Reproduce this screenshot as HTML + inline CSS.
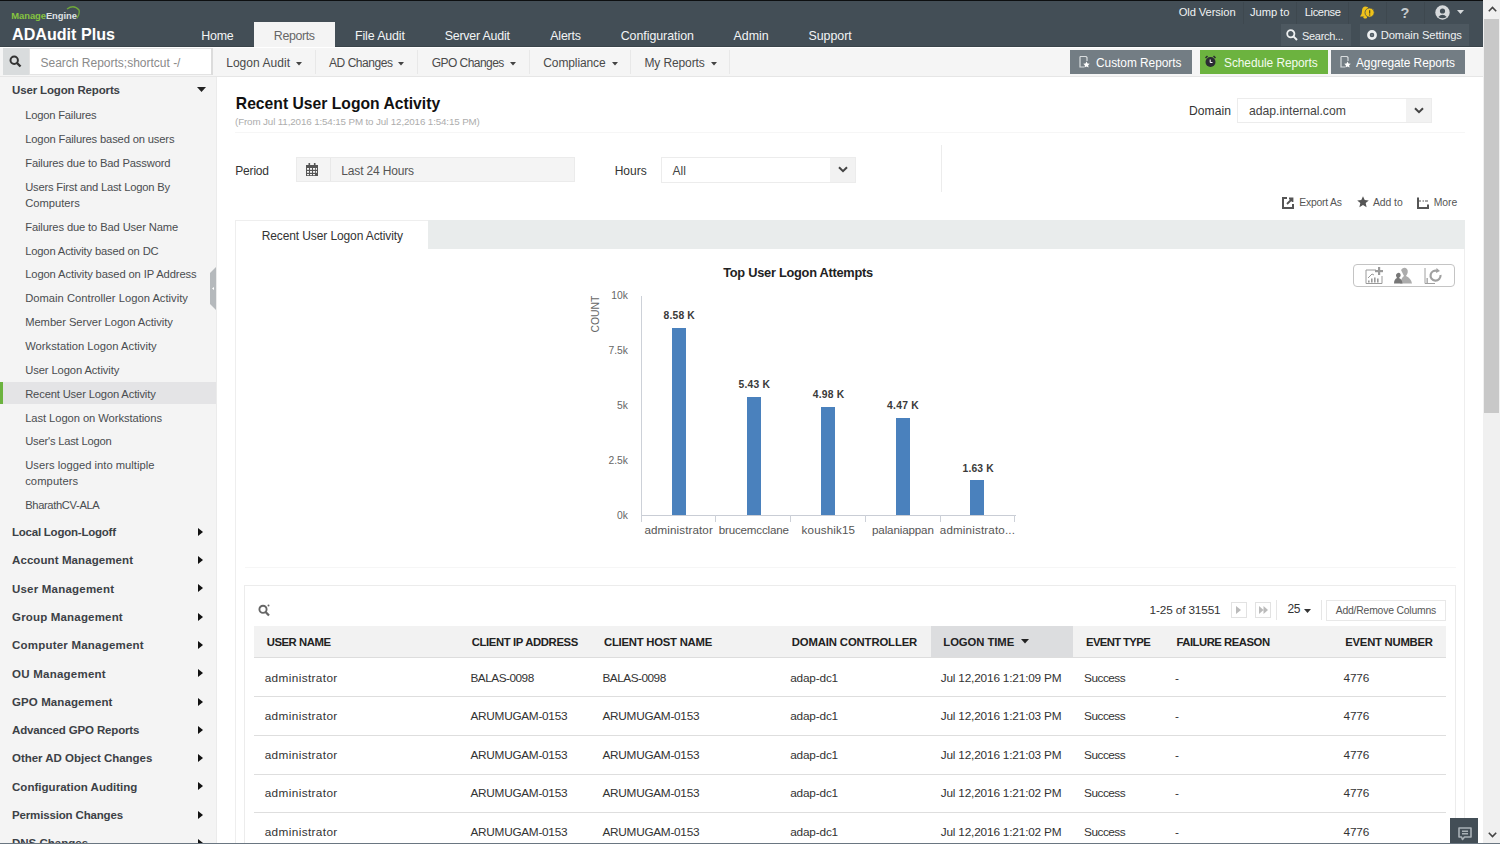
<!DOCTYPE html>
<html><head><meta charset="utf-8"><style>
html,body{margin:0;padding:0;}
body{width:1500px;height:844px;overflow:hidden;position:relative;background:#fff;font-family:"Liberation Sans",sans-serif;}
.t{position:absolute;white-space:nowrap;line-height:1;}
.r{position:absolute;}
</style></head><body>
<div class="r" style="left:0px;top:0px;width:1483px;height:47px;background:#434e56;"></div>
<div class="r" style="left:0px;top:0px;width:1483px;height:1px;background:#0d0f10;"></div>
<div class="r" style="left:0px;top:46px;width:1483px;height:1px;background:#3a444a;"></div>
<div class="t" style="left:11.30px;top:10.64px;font-size:9.4px;color:#fff;font-weight:bold;letter-spacing:-0.056px;"><span style="color:#86c440">Manage</span><span style="color:#dfe2e4">Engine</span></div>
<svg class="r" style="left:64px;top:5px" width="18" height="14" viewBox="0 0 18 14"><path d="M3 4 Q10 -1 15 5 Q16 9 13 13" fill="none" stroke="#6fa83a" stroke-width="1.3"/></svg>
<div class="t" style="left:12.00px;top:25.77px;font-size:16.1px;color:#ffffff;font-weight:bold;letter-spacing:0.011px;">ADAudit Plus</div>
<div class="r" style="left:254px;top:22px;width:81px;height:25px;background:#f4f4f4;"></div>
<div class="t" style="left:201.30px;top:29.80px;font-size:12.4px;color:#f2f4f5;letter-spacing:-0.236px;">Home</div>
<div class="t" style="left:273.80px;top:29.80px;font-size:12.4px;color:#666;letter-spacing:-0.367px;">Reports</div>
<div class="t" style="left:355.00px;top:29.80px;font-size:12.4px;color:#f2f4f5;letter-spacing:-0.114px;">File Audit</div>
<div class="t" style="left:444.70px;top:29.80px;font-size:12.4px;color:#f2f4f5;letter-spacing:-0.207px;">Server Audit</div>
<div class="t" style="left:550.30px;top:29.80px;font-size:12.4px;color:#f2f4f5;letter-spacing:-0.196px;">Alerts</div>
<div class="t" style="left:620.70px;top:29.80px;font-size:12.4px;color:#f2f4f5;letter-spacing:-0.040px;">Configuration</div>
<div class="t" style="left:733.60px;top:29.80px;font-size:12.4px;color:#f2f4f5;letter-spacing:0.011px;">Admin</div>
<div class="t" style="left:808.40px;top:29.80px;font-size:12.4px;color:#f2f4f5;letter-spacing:-0.010px;">Support</div>
<div class="t" style="left:1178.70px;top:7.22px;font-size:11.2px;color:#f0f2f3;letter-spacing:-0.090px;">Old Version</div>
<div class="t" style="left:1250.00px;top:7.22px;font-size:11.2px;color:#f0f2f3;letter-spacing:-0.069px;">Jump to</div>
<div class="t" style="left:1304.70px;top:7.22px;font-size:11.2px;color:#f0f2f3;letter-spacing:-0.381px;">License</div>
<div class="r" style="left:1243px;top:2px;width:1px;height:22px;background:#3e484f;"></div>
<div class="r" style="left:1296px;top:2px;width:1px;height:22px;background:#3e484f;"></div>
<div class="r" style="left:1348px;top:2px;width:1px;height:22px;background:#3e484f;"></div>
<div class="r" style="left:1386px;top:2px;width:1px;height:22px;background:#3e484f;"></div>
<div class="r" style="left:1424px;top:2px;width:1px;height:22px;background:#3e484f;"></div>
<svg class="r" style="left:1359px;top:5px" width="16" height="15" viewBox="0 0 16 15"><path d="M1 11.5 Q3 10 3 6 Q3 1.5 6.5 1.5 Q9 1.5 9.8 3.5 L10 11.5 Z" fill="#efc21a"/><rect x="4.5" y="11" width="3.5" height="2.5" rx="1.2" fill="#efc21a"/><circle cx="10.6" cy="7.6" r="4.6" fill="#efc21a" stroke="#434e56" stroke-width="0.8"/><rect x="10" y="5.2" width="1.3" height="3.4" fill="#5a5020"/><rect x="10" y="9.4" width="1.3" height="1.2" fill="#5a5020"/></svg>
<div class="t" style="left:1400.50px;top:5.63px;font-size:14.5px;color:#c6cbce;font-weight:bold;">?</div>
<svg class="r" style="left:1435px;top:5px" width="16" height="16" viewBox="0 0 16 16"><circle cx="7.5" cy="7.5" r="7.2" fill="#d7dadc"/><circle cx="7.5" cy="6" r="2.6" fill="#434e56"/><path d="M3.3 12 Q7.5 7.5 11.7 12 Q7.5 14.5 3.3 12Z" fill="#434e56"/></svg>
<svg class="r" style="left:1457px;top:10px" width="7" height="4" viewBox="0 0 7 4"><path d="M0 0 L7 0 L3.5 4Z" fill="#d7dadc"/></svg>
<div class="r" style="left:1281px;top:24px;width:70px;height:22px;background:#4d5860;"></div>
<svg class="r" style="left:1286px;top:29px" width="12" height="12" viewBox="0 0 12 12"><circle cx="4.8" cy="4.8" r="3.6" fill="none" stroke="#eef0f1" stroke-width="1.8"/><path d="M7.4 7.4 L11 11" stroke="#eef0f1" stroke-width="2"/></svg>
<div class="t" style="left:1302.00px;top:30.59px;font-size:11.0px;color:#eef0f1;letter-spacing:-0.300px;">Search...</div>
<div class="r" style="left:1360px;top:24px;width:109px;height:22px;background:#4d5860;"></div>
<svg class="r" style="left:1366px;top:29px" width="12" height="12" viewBox="0 0 12 12"><circle cx="6" cy="6" r="3.6" fill="none" stroke="#eef0f1" stroke-width="2.6"/><circle cx="6" cy="6" r="1.3" fill="#6d767c"/></svg>
<div class="t" style="left:1380.70px;top:30.42px;font-size:11.2px;color:#eef0f1;letter-spacing:-0.061px;">Domain Settings</div>
<div class="r" style="left:0px;top:47px;width:1483px;height:30px;background:#f5f5f5;"></div>
<div class="r" style="left:0px;top:47px;width:1483px;height:1px;background:#ffffff;"></div>
<div class="r" style="left:0px;top:76px;width:1483px;height:1px;background:#e6e6e6;"></div>
<div class="r" style="left:3px;top:48px;width:26px;height:27px;background:#d9dcdd;"></div>
<svg class="r" style="left:9px;top:55px" width="13" height="13" viewBox="0 0 13 13"><circle cx="5.2" cy="5.2" r="3.7" fill="none" stroke="#333" stroke-width="2"/><path d="M8 8 L11.5 11.5" stroke="#333" stroke-width="2.4"/></svg>
<div class="r" style="left:29px;top:48px;width:183px;height:27px;background:#ffffff;box-shadow:inset 0 0 0 1px #e3e3e3;"></div>
<div class="r" style="left:211px;top:48px;width:2px;height:27px;background:#dcdcdc;"></div>
<div class="t" style="left:40.50px;top:56.74px;font-size:12.0px;color:#8a8a8a;letter-spacing:-0.004px;">Search Reports;shortcut -/</div>
<div class="t" style="left:226.20px;top:57.04px;font-size:12.0px;color:#4a4a4a;letter-spacing:0.038px;">Logon Audit</div>
<svg class="r" style="left:295.6px;top:62px" width="6" height="4" viewBox="0 0 6 4"><path d="M0 0 L6 0 L3 3.5Z" fill="#444"/></svg>
<div class="t" style="left:329.00px;top:57.04px;font-size:12.0px;color:#4a4a4a;letter-spacing:-0.449px;">AD Changes</div>
<svg class="r" style="left:397.5px;top:62px" width="6" height="4" viewBox="0 0 6 4"><path d="M0 0 L6 0 L3 3.5Z" fill="#444"/></svg>
<div class="t" style="left:431.70px;top:57.04px;font-size:12.0px;color:#4a4a4a;letter-spacing:-0.546px;">GPO Changes</div>
<svg class="r" style="left:510px;top:62px" width="6" height="4" viewBox="0 0 6 4"><path d="M0 0 L6 0 L3 3.5Z" fill="#444"/></svg>
<div class="t" style="left:543.30px;top:57.04px;font-size:12.0px;color:#4a4a4a;letter-spacing:-0.118px;">Compliance</div>
<svg class="r" style="left:611.5px;top:62px" width="6" height="4" viewBox="0 0 6 4"><path d="M0 0 L6 0 L3 3.5Z" fill="#444"/></svg>
<div class="t" style="left:644.40px;top:57.04px;font-size:12.0px;color:#4a4a4a;letter-spacing:-0.102px;">My Reports</div>
<svg class="r" style="left:710.5px;top:62px" width="6" height="4" viewBox="0 0 6 4"><path d="M0 0 L6 0 L3 3.5Z" fill="#444"/></svg>
<div class="r" style="left:315px;top:50px;width:1px;height:24px;background:#e8e8e8;"></div>
<div class="r" style="left:417px;top:50px;width:1px;height:24px;background:#e8e8e8;"></div>
<div class="r" style="left:529px;top:50px;width:1px;height:24px;background:#e8e8e8;"></div>
<div class="r" style="left:630px;top:50px;width:1px;height:24px;background:#e8e8e8;"></div>
<div class="r" style="left:729px;top:50px;width:1px;height:24px;background:#e8e8e8;"></div>
<div class="r" style="left:1070px;top:50px;width:122px;height:24px;background:#737d84;"></div>
<div class="r" style="left:1200px;top:50px;width:128px;height:24px;background:#6cb33f;"></div>
<div class="r" style="left:1331px;top:50px;width:134px;height:24px;background:#737d84;"></div>
<svg class="r" style="left:1079px;top:56px" width="11" height="12" viewBox="0 0 11 12"><path d="M1 0.5 H7 L8 1.5 V5 M1 0.5 V11 H5" fill="none" stroke="#d8dcde" stroke-width="1.2"/><path d="M7.5 5.5 L8.5 7.6 L10.8 7.8 L9.1 9.3 L9.6 11.6 L7.5 10.4 L5.4 11.6 L5.9 9.3 L4.2 7.8 L6.5 7.6Z" fill="#fff"/></svg>
<svg class="r" style="left:1340px;top:56px" width="11" height="12" viewBox="0 0 11 12"><path d="M1 0.5 H7 L8 1.5 V5 M1 0.5 V11 H5" fill="none" stroke="#d8dcde" stroke-width="1.2"/><path d="M7.5 5.5 L8.5 7.6 L10.8 7.8 L9.1 9.3 L9.6 11.6 L7.5 10.4 L5.4 11.6 L5.9 9.3 L4.2 7.8 L6.5 7.6Z" fill="#fff"/></svg>
<div class="t" style="left:1096.00px;top:57.53px;font-size:11.9px;color:#ffffff;letter-spacing:-0.037px;">Custom Reports</div>
<svg class="r" style="left:1204px;top:55px" width="13" height="13" viewBox="0 0 13 13"><circle cx="6.5" cy="7" r="5" fill="#2b2b33"/><path d="M1.5 3 L3.5 1 M11.5 3 L9.5 1" stroke="#2b2b33" stroke-width="1.5"/><path d="M6.2 4.5 V7.5 H8.5" stroke="#fff" stroke-width="1" fill="none"/></svg>
<div class="t" style="left:1224.00px;top:57.53px;font-size:11.9px;color:#f3fbee;letter-spacing:-0.054px;">Schedule Reports</div>
<div class="t" style="left:1356.00px;top:57.53px;font-size:11.9px;color:#ffffff;letter-spacing:-0.056px;">Aggregate Reports</div>
<div class="r" style="left:0px;top:77px;width:216px;height:767px;background:#f4f4f4;"></div>
<div class="r" style="left:216px;top:77px;width:1px;height:767px;background:#ebebeb;"></div>
<div class="t" style="left:12.00px;top:84.67px;font-size:11.5px;color:#3c4146;font-weight:bold;letter-spacing:-0.148px;">User Logon Reports</div>
<svg class="r" style="left:197px;top:87px" width="9" height="5" viewBox="0 0 9 5"><path d="M0 0 L9 0 L4.5 5Z" fill="#222"/></svg>
<div class="t" style="left:25.20px;top:110.32px;font-size:11.2px;color:#4a4d50;letter-spacing:-0.199px;">Logon Failures</div>
<div class="t" style="left:25.20px;top:134.17px;font-size:11.2px;color:#4a4d50;letter-spacing:-0.153px;">Logon Failures based on users</div>
<div class="t" style="left:25.20px;top:158.02px;font-size:11.2px;color:#4a4d50;letter-spacing:-0.145px;">Failures due to Bad Password</div>
<div class="t" style="left:25.20px;top:181.87px;font-size:11.2px;color:#4a4d50;letter-spacing:-0.201px;">Users First and Last Logon By</div>
<div class="t" style="left:25.20px;top:197.87px;font-size:11.2px;color:#4a4d50;letter-spacing:-0.008px;">Computers</div>
<div class="t" style="left:25.20px;top:221.72px;font-size:11.2px;color:#4a4d50;letter-spacing:-0.134px;">Failures due to Bad User Name</div>
<div class="t" style="left:25.20px;top:245.57px;font-size:11.2px;color:#4a4d50;letter-spacing:-0.160px;">Logon Activity based on DC</div>
<div class="t" style="left:25.20px;top:269.42px;font-size:11.2px;color:#4a4d50;letter-spacing:-0.115px;">Logon Activity based on IP Address</div>
<div class="t" style="left:25.20px;top:293.27px;font-size:11.2px;color:#4a4d50;letter-spacing:0.014px;">Domain Controller Logon Activity</div>
<div class="t" style="left:25.20px;top:317.12px;font-size:11.2px;color:#4a4d50;letter-spacing:-0.056px;">Member Server Logon Activity</div>
<div class="t" style="left:25.20px;top:340.97px;font-size:11.2px;color:#4a4d50;letter-spacing:0.018px;">Workstation Logon Activity</div>
<div class="t" style="left:25.20px;top:364.82px;font-size:11.2px;color:#4a4d50;letter-spacing:-0.093px;">User Logon Activity</div>
<div class="r" style="left:0px;top:382px;width:216px;height:22px;background:#e4e4e6;"></div>
<div class="r" style="left:0px;top:382px;width:3px;height:22px;background:#6cb33f;"></div>
<div class="t" style="left:25.20px;top:388.67px;font-size:11.2px;color:#4a4d50;letter-spacing:-0.150px;">Recent User Logon Activity</div>
<div class="t" style="left:25.20px;top:412.52px;font-size:11.2px;color:#4a4d50;letter-spacing:-0.066px;">Last Logon on Workstations</div>
<div class="t" style="left:25.20px;top:436.37px;font-size:11.2px;color:#4a4d50;letter-spacing:-0.208px;">User's Last Logon</div>
<div class="t" style="left:25.20px;top:460.22px;font-size:11.2px;color:#4a4d50;letter-spacing:0.022px;">Users logged into multiple</div>
<div class="t" style="left:25.20px;top:476.22px;font-size:11.2px;color:#4a4d50;letter-spacing:0.087px;">computers</div>
<div class="t" style="left:25.20px;top:500.07px;font-size:11.2px;color:#4a4d50;letter-spacing:-0.361px;">BharathCV-ALA</div>
<div class="t" style="left:12.00px;top:527.07px;font-size:11.5px;color:#3c4146;font-weight:bold;letter-spacing:-0.234px;">Local Logon-Logoff</div>
<svg class="r" style="left:197.5px;top:527.7px" width="5" height="8" viewBox="0 0 5 8"><path d="M0 0 L5 4 L0 8Z" fill="#111"/></svg>
<div class="t" style="left:12.00px;top:555.37px;font-size:11.5px;color:#3c4146;font-weight:bold;letter-spacing:0.089px;">Account Management</div>
<svg class="r" style="left:197.5px;top:556.0px" width="5" height="8" viewBox="0 0 5 8"><path d="M0 0 L5 4 L0 8Z" fill="#111"/></svg>
<div class="t" style="left:12.00px;top:583.67px;font-size:11.5px;color:#3c4146;font-weight:bold;letter-spacing:0.209px;">User Management</div>
<svg class="r" style="left:197.5px;top:584.3px" width="5" height="8" viewBox="0 0 5 8"><path d="M0 0 L5 4 L0 8Z" fill="#111"/></svg>
<div class="t" style="left:12.00px;top:611.97px;font-size:11.5px;color:#3c4146;font-weight:bold;letter-spacing:0.181px;">Group Management</div>
<svg class="r" style="left:197.5px;top:612.6px" width="5" height="8" viewBox="0 0 5 8"><path d="M0 0 L5 4 L0 8Z" fill="#111"/></svg>
<div class="t" style="left:12.00px;top:640.27px;font-size:11.5px;color:#3c4146;font-weight:bold;letter-spacing:0.215px;">Computer Management</div>
<svg class="r" style="left:197.5px;top:640.9px" width="5" height="8" viewBox="0 0 5 8"><path d="M0 0 L5 4 L0 8Z" fill="#111"/></svg>
<div class="t" style="left:12.00px;top:668.57px;font-size:11.5px;color:#3c4146;font-weight:bold;letter-spacing:0.247px;">OU Management</div>
<svg class="r" style="left:197.5px;top:669.2px" width="5" height="8" viewBox="0 0 5 8"><path d="M0 0 L5 4 L0 8Z" fill="#111"/></svg>
<div class="t" style="left:12.00px;top:696.87px;font-size:11.5px;color:#3c4146;font-weight:bold;letter-spacing:0.102px;">GPO Management</div>
<svg class="r" style="left:197.5px;top:697.5px" width="5" height="8" viewBox="0 0 5 8"><path d="M0 0 L5 4 L0 8Z" fill="#111"/></svg>
<div class="t" style="left:12.00px;top:725.17px;font-size:11.5px;color:#3c4146;font-weight:bold;letter-spacing:-0.155px;">Advanced GPO Reports</div>
<svg class="r" style="left:197.5px;top:725.8px" width="5" height="8" viewBox="0 0 5 8"><path d="M0 0 L5 4 L0 8Z" fill="#111"/></svg>
<div class="t" style="left:12.00px;top:753.47px;font-size:11.5px;color:#3c4146;font-weight:bold;letter-spacing:-0.019px;">Other AD Object Changes</div>
<svg class="r" style="left:197.5px;top:754.1px" width="5" height="8" viewBox="0 0 5 8"><path d="M0 0 L5 4 L0 8Z" fill="#111"/></svg>
<div class="t" style="left:12.00px;top:781.77px;font-size:11.5px;color:#3c4146;font-weight:bold;letter-spacing:0.030px;">Configuration Auditing</div>
<svg class="r" style="left:197.5px;top:782.4px" width="5" height="8" viewBox="0 0 5 8"><path d="M0 0 L5 4 L0 8Z" fill="#111"/></svg>
<div class="t" style="left:12.00px;top:810.07px;font-size:11.5px;color:#3c4146;font-weight:bold;letter-spacing:-0.155px;">Permission Changes</div>
<svg class="r" style="left:197.5px;top:810.7px" width="5" height="8" viewBox="0 0 5 8"><path d="M0 0 L5 4 L0 8Z" fill="#111"/></svg>
<div class="t" style="left:12.00px;top:838.37px;font-size:11.5px;color:#3c4146;font-weight:bold;">DNS Changes</div>
<svg class="r" style="left:197.5px;top:839.0px" width="5" height="8" viewBox="0 0 5 8"><path d="M0 0 L5 4 L0 8Z" fill="#111"/></svg>
<svg class="r" style="left:210px;top:267px" width="7" height="43" viewBox="0 0 7 43"><path d="M6 0 L6 43 L0 37 L0 6Z" fill="#b5b9bc"/><path d="M2 21.5 L4 20 L4 23Z" fill="#fff"/></svg>
<div class="r" style="left:1483px;top:0px;width:17px;height:844px;background:#f0f0f0;"></div>
<div class="r" style="left:1484px;top:19px;width:15px;height:394px;background:#c8c8c8;"></div>
<svg class="r" style="left:1488px;top:6px" width="9" height="6" viewBox="0 0 9 6"><path d="M0.8 5.2 L4.5 1.5 L8.2 5.2" fill="none" stroke="#444" stroke-width="1.6"/></svg>
<svg class="r" style="left:1488px;top:832px" width="9" height="6" viewBox="0 0 9 6"><path d="M0.8 0.8 L4.5 4.5 L8.2 0.8" fill="none" stroke="#444" stroke-width="1.6"/></svg>
<div class="t" style="left:235.80px;top:95.51px;font-size:15.7px;color:#111;font-weight:bold;letter-spacing:0.003px;">Recent User Logon Activity</div>
<div class="t" style="left:235.00px;top:117.30px;font-size:9.8px;color:#adadad;letter-spacing:-0.131px;">(From Jul 11,2016 1:54:15 PM to Jul 12,2016 1:54:15 PM)</div>
<div class="r" style="left:235px;top:132px;width:1230px;height:1px;background:#f6f6f6;"></div>
<div class="t" style="left:1189.00px;top:104.76px;font-size:12.1px;color:#333;letter-spacing:0.063px;">Domain</div>
<div class="r" style="left:1237px;top:98px;width:195px;height:25px;background:#fff;box-shadow:inset 0 0 0 1px #ececec;"></div>
<div class="r" style="left:1406px;top:99px;width:25px;height:23px;background:#f2f2f2;"></div>
<div class="t" style="left:1249.00px;top:104.67px;font-size:12.2px;color:#444;letter-spacing:0.001px;">adap.internal.com</div>
<svg class="r" style="left:1413.5px;top:107px" width="10" height="7" viewBox="0 0 10 7"><path d="M1 1.2 L5 5.2 L9 1.2" fill="none" stroke="#444" stroke-width="2"/></svg>
<div class="t" style="left:235.30px;top:165.14px;font-size:12.0px;color:#333;letter-spacing:-0.196px;">Period</div>
<div class="r" style="left:296px;top:157px;width:279px;height:25px;background:#f4f4f4;box-shadow:inset 0 0 0 1px #ebebeb;"></div>
<div class="r" style="left:330px;top:158px;width:1px;height:23px;background:#e8e8e8;"></div>
<svg class="r" style="left:306px;top:163px" width="12" height="13" viewBox="0 0 12 13"><rect x="0" y="2" width="12" height="11" fill="#555"/><rect x="2.5" y="0" width="1.6" height="3" fill="#555"/><rect x="7.9" y="0" width="1.6" height="3" fill="#555"/><g fill="#f3f3f3"><rect x="1" y="5" width="2" height="1.8"/><rect x="4" y="5" width="2" height="1.8"/><rect x="7" y="5" width="2" height="1.8"/><rect x="1" y="8" width="2" height="1.8"/><rect x="4" y="8" width="2" height="1.8"/><rect x="7" y="8" width="2" height="1.8"/><rect x="1" y="11" width="2" height="1.2"/><rect x="4" y="11" width="2" height="1.2"/><rect x="7" y="11" width="2" height="1.2"/><rect x="9.8" y="5" width="1.2" height="1.8"/><rect x="9.8" y="8" width="1.2" height="1.8"/></g></svg>
<div class="t" style="left:341.30px;top:165.14px;font-size:12.0px;color:#555;letter-spacing:-0.167px;">Last 24 Hours</div>
<div class="t" style="left:614.70px;top:165.14px;font-size:12.0px;color:#333;letter-spacing:-0.010px;">Hours</div>
<div class="r" style="left:661px;top:157px;width:195px;height:26px;background:#fff;box-shadow:inset 0 0 0 1px #ececec;"></div>
<div class="r" style="left:830px;top:158px;width:25px;height:24px;background:#f2f2f2;"></div>
<svg class="r" style="left:838px;top:166px" width="10" height="7" viewBox="0 0 10 7"><path d="M1 1.2 L5 5.2 L9 1.2" fill="none" stroke="#444" stroke-width="2"/></svg>
<div class="t" style="left:672.50px;top:165.14px;font-size:12.0px;color:#444;">All</div>
<div class="r" style="left:941px;top:145px;width:1px;height:47px;background:#ececec;"></div>
<svg class="r" style="left:1282px;top:197px" width="12" height="12" viewBox="0 0 12 12"><path d="M5 1 H1 V11 H11 V7" fill="none" stroke="#555" stroke-width="2"/><path d="M5 7 L10 2 M7 1.5 H10.5 V5" fill="none" stroke="#555" stroke-width="1.8"/></svg>
<div class="t" style="left:1299.30px;top:197.80px;font-size:10.4px;color:#555;letter-spacing:-0.226px;">Export As</div>
<svg class="r" style="left:1357px;top:196px" width="12" height="12" viewBox="0 0 12 12"><path d="M6 0.3 L7.7 4.1 L11.8 4.4 L8.7 7.1 L9.6 11.2 L6 9 L2.4 11.2 L3.3 7.1 L0.2 4.4 L4.3 4.1Z" fill="#555"/></svg>
<div class="t" style="left:1373.00px;top:197.80px;font-size:10.4px;color:#555;letter-spacing:-0.071px;">Add to</div>
<svg class="r" style="left:1417px;top:197px" width="12" height="12" viewBox="0 0 12 12"><path d="M1 0.5 V11 H11 V7.5" fill="none" stroke="#555" stroke-width="2"/><path d="M1 4 H4 M5.5 4 H7 M8 4 H11" stroke="#555" stroke-width="1.2"/></svg>
<div class="t" style="left:1433.70px;top:197.80px;font-size:10.4px;color:#555;letter-spacing:-0.037px;">More</div>
<div class="r" style="left:235px;top:220px;width:1230px;height:624px;background:#fff;box-shadow:inset 1px 0 0 #eeeeee, inset -1px 0 0 #eeeeee, inset 0 1px 0 #eeeeee;"></div>
<div class="r" style="left:428px;top:220px;width:1037px;height:29px;background:#e9ecec;"></div>
<div class="t" style="left:261.70px;top:229.74px;font-size:12.0px;color:#333;letter-spacing:-0.110px;">Recent User Logon Activity</div>
<div class="t" style="left:723.20px;top:266.56px;font-size:12.8px;color:#222;font-weight:bold;letter-spacing:-0.260px;">Top User Logon Attempts</div>
<div class="r" style="left:1353px;top:264px;width:102px;height:23px;border:1px solid #c4c4c4;border-radius:4px;box-sizing:border-box;"></div>
<svg class="r" style="left:1364px;top:266px" width="82" height="19" viewBox="0 0 82 19">
<g fill="none" stroke="#9a9a9a"><path d="M2 4 V17.5 H18 V10" stroke-width="1"/><path d="M2 4 H12" stroke-width="1"/><path d="M4 12 L8 8 L10 9" stroke-width="1"/></g>
<g fill="#9a9a9a"><rect x="4" y="14.5" width="1.6" height="2"/><rect x="7" y="12.5" width="1.6" height="4"/><rect x="10" y="11.5" width="1.6" height="5"/><rect x="13" y="12.5" width="1.6" height="4"/><rect x="14" y="1" width="2.2" height="8"/><rect x="11" y="4" width="8" height="2.2"/></g>
<g fill="#9d9d9d"><path d="M37 4 Q40 0 43 3 Q45 6 42 10 Q47 12 48 17.5 H36 Q37 12 40 10Z" opacity="0.85"/><path d="M30 17.5 Q30 13 33 12 Q31 9 33 7.5 Q35 6 36.5 8 Q37.5 10 35 12 Q38 13 38.5 17.5Z" fill="#777"/></g>
<g fill="none" stroke="#a0a0a0"><path d="M61 2 V17.5 H71" stroke-width="1"/><rect x="62.5" y="12" width="1.3" height="5" fill="#a0a0a0" stroke="none"/><path d="M76.5 9 A5 5 0 1 1 73.5 5" stroke-width="2.2"/><path d="M72.5 2 L76 5 L72 7Z" fill="#a0a0a0" stroke="none"/></g>
</svg>
<div class="t" style="left:575.5px;top:309px;width:40px;font-size:10.4px;line-height:10px;color:#666;text-align:center;transform:rotate(-90deg);">COUNT</div>
<div class="t" style="left:611.37px;top:290.68px;font-size:10.3px;color:#666;">10k</div>
<div class="t" style="left:608.48px;top:345.68px;font-size:10.3px;color:#666;">7.5k</div>
<div class="t" style="left:617.08px;top:400.68px;font-size:10.3px;color:#666;">5k</div>
<div class="t" style="left:608.48px;top:455.68px;font-size:10.3px;color:#666;">2.5k</div>
<div class="t" style="left:617.08px;top:510.68px;font-size:10.3px;color:#666;">0k</div>
<div class="r" style="left:641px;top:296px;width:1px;height:226px;background:#cdd1d8;"></div>
<div class="r" style="left:641px;top:515px;width:375px;height:1px;background:#c9cdd5;"></div>
<div class="r" style="left:641px;top:515px;width:1px;height:7px;background:#cdd1d8;"></div>
<div class="r" style="left:715px;top:515px;width:1px;height:7px;background:#cdd1d8;"></div>
<div class="r" style="left:790px;top:515px;width:1px;height:7px;background:#cdd1d8;"></div>
<div class="r" style="left:865px;top:515px;width:1px;height:7px;background:#cdd1d8;"></div>
<div class="r" style="left:940px;top:515px;width:1px;height:7px;background:#cdd1d8;"></div>
<div class="r" style="left:1014px;top:515px;width:1px;height:7px;background:#cdd1d8;"></div>
<div class="r" style="left:672px;top:328px;width:13.5px;height:187px;background:#4a81bd;"></div>
<div class="t" style="left:663.60px;top:311.48px;font-size:10.3px;color:#3a3a3a;font-weight:bold;letter-spacing:0.173px;">8.58 K</div>
<div class="t" style="left:644.40px;top:524.38px;font-size:11.6px;color:#555;letter-spacing:0.113px;">administrator</div>
<div class="r" style="left:747px;top:397px;width:13.5px;height:118px;background:#4a81bd;"></div>
<div class="t" style="left:738.60px;top:380.46px;font-size:10.3px;color:#3a3a3a;font-weight:bold;letter-spacing:0.213px;">5.43 K</div>
<div class="t" style="left:718.70px;top:524.38px;font-size:11.6px;color:#555;letter-spacing:-0.165px;">brucemcclane</div>
<div class="r" style="left:821px;top:407px;width:13.5px;height:108px;background:#4a81bd;"></div>
<div class="t" style="left:812.80px;top:390.32px;font-size:10.3px;color:#3a3a3a;font-weight:bold;letter-spacing:0.233px;">4.98 K</div>
<div class="t" style="left:801.60px;top:524.38px;font-size:11.6px;color:#555;letter-spacing:0.155px;">koushik15</div>
<div class="r" style="left:896px;top:418px;width:13.5px;height:97px;background:#4a81bd;"></div>
<div class="t" style="left:887.00px;top:401.49px;font-size:10.3px;color:#3a3a3a;font-weight:bold;letter-spacing:0.273px;">4.47 K</div>
<div class="t" style="left:872.00px;top:524.38px;font-size:11.6px;color:#555;letter-spacing:-0.132px;">palaniappan</div>
<div class="r" style="left:970px;top:480px;width:13.5px;height:35px;background:#4a81bd;"></div>
<div class="t" style="left:962.60px;top:463.68px;font-size:10.3px;color:#3a3a3a;font-weight:bold;letter-spacing:0.153px;">1.63 K</div>
<div class="t" style="left:939.80px;top:524.38px;font-size:11.6px;color:#555;letter-spacing:0.168px;">administrato...</div>
<div class="r" style="left:245px;top:567px;width:1211px;height:1px;background:#f6f6f6;"></div>
<div class="r" style="left:244px;top:585px;width:1212px;height:270px;border:1px solid #ececec;box-sizing:border-box;"></div>
<svg class="r" style="left:258px;top:604px" width="13" height="13" viewBox="0 0 13 13"><circle cx="5" cy="5.3" r="3.6" fill="none" stroke="#666" stroke-width="1.9"/><path d="M7.6 8 L11 11.5" stroke="#666" stroke-width="2.3"/><circle cx="10.5" cy="1.5" r="1" fill="#666"/></svg>
<div class="t" style="left:1149.60px;top:605.11px;font-size:11.8px;color:#333;letter-spacing:-0.150px;">1-25 of 31551</div>
<div class="r" style="left:1231px;top:602px;width:16px;height:16px;border:1px solid #e2e2e2;box-sizing:border-box;"></div>
<svg class="r" style="left:1236px;top:606px" width="5" height="8" viewBox="0 0 5 8"><path d="M0 0 L5 4 L0 8Z" fill="#bbb"/></svg>
<div class="r" style="left:1255px;top:602px;width:16px;height:16px;border:1px solid #e2e2e2;box-sizing:border-box;"></div>
<svg class="r" style="left:1258.5px;top:606px" width="9" height="8" viewBox="0 0 9 8"><path d="M0 0 L4.5 4 L0 8Z M4.5 0 L9 4 L4.5 8Z" fill="#bbb"/></svg>
<div class="r" style="left:1276px;top:600px;width:1px;height:20px;background:#e6e6e6;"></div>
<div class="t" style="left:1287.50px;top:602.84px;font-size:12px;color:#333;letter-spacing:-0.520px;">25</div>
<svg class="r" style="left:1304px;top:609px" width="7" height="4" viewBox="0 0 7 4"><path d="M0 0 L7 0 L3.5 4Z" fill="#333"/></svg>
<div class="r" style="left:1321px;top:600px;width:1px;height:20px;background:#e6e6e6;"></div>
<div class="r" style="left:1326px;top:600px;width:120px;height:21px;border:1px solid #e8e8e8;box-sizing:border-box;"></div>
<div class="t" style="left:1335.70px;top:605.70px;font-size:10.4px;color:#555;letter-spacing:-0.197px;">Add/Remove Columns</div>
<div class="r" style="left:254px;top:626px;width:1192px;height:31px;background:#f2f2f2;"></div>
<div class="r" style="left:931px;top:626px;width:142px;height:31px;background:#dcdddf;"></div>
<div class="r" style="left:254px;top:657px;width:1192px;height:1px;background:#dddddd;"></div>
<div class="t" style="left:266.70px;top:636.83px;font-size:11.3px;color:#222;font-weight:bold;letter-spacing:-0.437px;">USER NAME</div>
<div class="t" style="left:471.70px;top:636.83px;font-size:11.3px;color:#222;font-weight:bold;letter-spacing:-0.361px;">CLIENT IP ADDRESS</div>
<div class="t" style="left:604.00px;top:636.83px;font-size:11.3px;color:#222;font-weight:bold;letter-spacing:-0.230px;">CLIENT HOST NAME</div>
<div class="t" style="left:791.70px;top:636.83px;font-size:11.3px;color:#222;font-weight:bold;letter-spacing:-0.113px;">DOMAIN CONTROLLER</div>
<div class="t" style="left:943.30px;top:636.83px;font-size:11.3px;color:#222;font-weight:bold;letter-spacing:-0.065px;">LOGON TIME</div>
<div class="t" style="left:1086.00px;top:636.83px;font-size:11.3px;color:#222;font-weight:bold;letter-spacing:-0.627px;">EVENT TYPE</div>
<div class="t" style="left:1176.40px;top:636.83px;font-size:11.3px;color:#222;font-weight:bold;letter-spacing:-0.472px;">FAILURE REASON</div>
<div class="t" style="left:1345.30px;top:636.83px;font-size:11.3px;color:#222;font-weight:bold;letter-spacing:-0.255px;">EVENT NUMBER</div>
<svg class="r" style="left:1021px;top:639px" width="8" height="5" viewBox="0 0 8 5"><path d="M0 0 L8 0 L4 4.5Z" fill="#222"/></svg>
<div class="t" style="left:264.70px;top:672.61px;font-size:11.8px;color:#333;letter-spacing:0.366px;">administrator</div>
<div class="t" style="left:470.50px;top:672.61px;font-size:11.8px;color:#333;letter-spacing:-0.500px;">BALAS-0098</div>
<div class="t" style="left:602.50px;top:672.61px;font-size:11.8px;color:#333;letter-spacing:-0.500px;">BALAS-0098</div>
<div class="t" style="left:790.20px;top:672.61px;font-size:11.8px;color:#333;letter-spacing:-0.172px;">adap-dc1</div>
<div class="t" style="left:940.70px;top:672.61px;font-size:11.8px;color:#333;letter-spacing:-0.175px;">Jul 12,2016 1:21:09 PM</div>
<div class="t" style="left:1084.00px;top:672.61px;font-size:11.8px;color:#333;letter-spacing:-0.484px;">Success</div>
<div class="t" style="left:1175.00px;top:672.61px;font-size:11.8px;color:#333;">-</div>
<div class="t" style="left:1343.60px;top:672.61px;font-size:11.8px;color:#333;letter-spacing:-0.185px;">4776</div>
<div class="r" style="left:254px;top:696px;width:1192px;height:1px;background:#dedede;"></div>
<div class="t" style="left:264.70px;top:711.21px;font-size:11.8px;color:#333;letter-spacing:0.366px;">administrator</div>
<div class="t" style="left:470.50px;top:711.21px;font-size:11.8px;color:#333;letter-spacing:-0.275px;">ARUMUGAM-0153</div>
<div class="t" style="left:602.50px;top:711.21px;font-size:11.8px;color:#333;letter-spacing:-0.275px;">ARUMUGAM-0153</div>
<div class="t" style="left:790.20px;top:711.21px;font-size:11.8px;color:#333;letter-spacing:-0.172px;">adap-dc1</div>
<div class="t" style="left:940.70px;top:711.21px;font-size:11.8px;color:#333;letter-spacing:-0.175px;">Jul 12,2016 1:21:03 PM</div>
<div class="t" style="left:1084.00px;top:711.21px;font-size:11.8px;color:#333;letter-spacing:-0.484px;">Success</div>
<div class="t" style="left:1175.00px;top:711.21px;font-size:11.8px;color:#333;">-</div>
<div class="t" style="left:1343.60px;top:711.21px;font-size:11.8px;color:#333;letter-spacing:-0.185px;">4776</div>
<div class="r" style="left:254px;top:735px;width:1192px;height:1px;background:#dedede;"></div>
<div class="t" style="left:264.70px;top:749.81px;font-size:11.8px;color:#333;letter-spacing:0.366px;">administrator</div>
<div class="t" style="left:470.50px;top:749.81px;font-size:11.8px;color:#333;letter-spacing:-0.275px;">ARUMUGAM-0153</div>
<div class="t" style="left:602.50px;top:749.81px;font-size:11.8px;color:#333;letter-spacing:-0.275px;">ARUMUGAM-0153</div>
<div class="t" style="left:790.20px;top:749.81px;font-size:11.8px;color:#333;letter-spacing:-0.172px;">adap-dc1</div>
<div class="t" style="left:940.70px;top:749.81px;font-size:11.8px;color:#333;letter-spacing:-0.175px;">Jul 12,2016 1:21:03 PM</div>
<div class="t" style="left:1084.00px;top:749.81px;font-size:11.8px;color:#333;letter-spacing:-0.484px;">Success</div>
<div class="t" style="left:1175.00px;top:749.81px;font-size:11.8px;color:#333;">-</div>
<div class="t" style="left:1343.60px;top:749.81px;font-size:11.8px;color:#333;letter-spacing:-0.185px;">4776</div>
<div class="r" style="left:254px;top:774px;width:1192px;height:1px;background:#dedede;"></div>
<div class="t" style="left:264.70px;top:788.41px;font-size:11.8px;color:#333;letter-spacing:0.366px;">administrator</div>
<div class="t" style="left:470.50px;top:788.41px;font-size:11.8px;color:#333;letter-spacing:-0.275px;">ARUMUGAM-0153</div>
<div class="t" style="left:602.50px;top:788.41px;font-size:11.8px;color:#333;letter-spacing:-0.275px;">ARUMUGAM-0153</div>
<div class="t" style="left:790.20px;top:788.41px;font-size:11.8px;color:#333;letter-spacing:-0.172px;">adap-dc1</div>
<div class="t" style="left:940.70px;top:788.41px;font-size:11.8px;color:#333;letter-spacing:-0.175px;">Jul 12,2016 1:21:02 PM</div>
<div class="t" style="left:1084.00px;top:788.41px;font-size:11.8px;color:#333;letter-spacing:-0.484px;">Success</div>
<div class="t" style="left:1175.00px;top:788.41px;font-size:11.8px;color:#333;">-</div>
<div class="t" style="left:1343.60px;top:788.41px;font-size:11.8px;color:#333;letter-spacing:-0.185px;">4776</div>
<div class="r" style="left:254px;top:812px;width:1192px;height:1px;background:#dedede;"></div>
<div class="t" style="left:264.70px;top:827.01px;font-size:11.8px;color:#333;letter-spacing:0.366px;">administrator</div>
<div class="t" style="left:470.50px;top:827.01px;font-size:11.8px;color:#333;letter-spacing:-0.275px;">ARUMUGAM-0153</div>
<div class="t" style="left:602.50px;top:827.01px;font-size:11.8px;color:#333;letter-spacing:-0.275px;">ARUMUGAM-0153</div>
<div class="t" style="left:790.20px;top:827.01px;font-size:11.8px;color:#333;letter-spacing:-0.172px;">adap-dc1</div>
<div class="t" style="left:940.70px;top:827.01px;font-size:11.8px;color:#333;letter-spacing:-0.175px;">Jul 12,2016 1:21:02 PM</div>
<div class="t" style="left:1084.00px;top:827.01px;font-size:11.8px;color:#333;letter-spacing:-0.484px;">Success</div>
<div class="t" style="left:1175.00px;top:827.01px;font-size:11.8px;color:#333;">-</div>
<div class="t" style="left:1343.60px;top:827.01px;font-size:11.8px;color:#333;letter-spacing:-0.185px;">4776</div>
<div class="r" style="left:1450px;top:818px;width:28px;height:26px;background:#434e56;"></div>
<svg class="r" style="left:1457px;top:826px" width="16" height="15" viewBox="0 0 16 15"><path d="M2 2 H14 V11 H7.5 L5.5 13.5 L4.5 11 H2Z" fill="none" stroke="#a9b1b6" stroke-width="1.6" stroke-linejoin="round"/><path d="M5 5.2 H11 M5 7.8 H11" stroke="#a9b1b6" stroke-width="1.5"/></svg>
<div class="r" style="left:0px;top:843px;width:1500px;height:1px;background:#6a7681;"></div>
</body></html>
